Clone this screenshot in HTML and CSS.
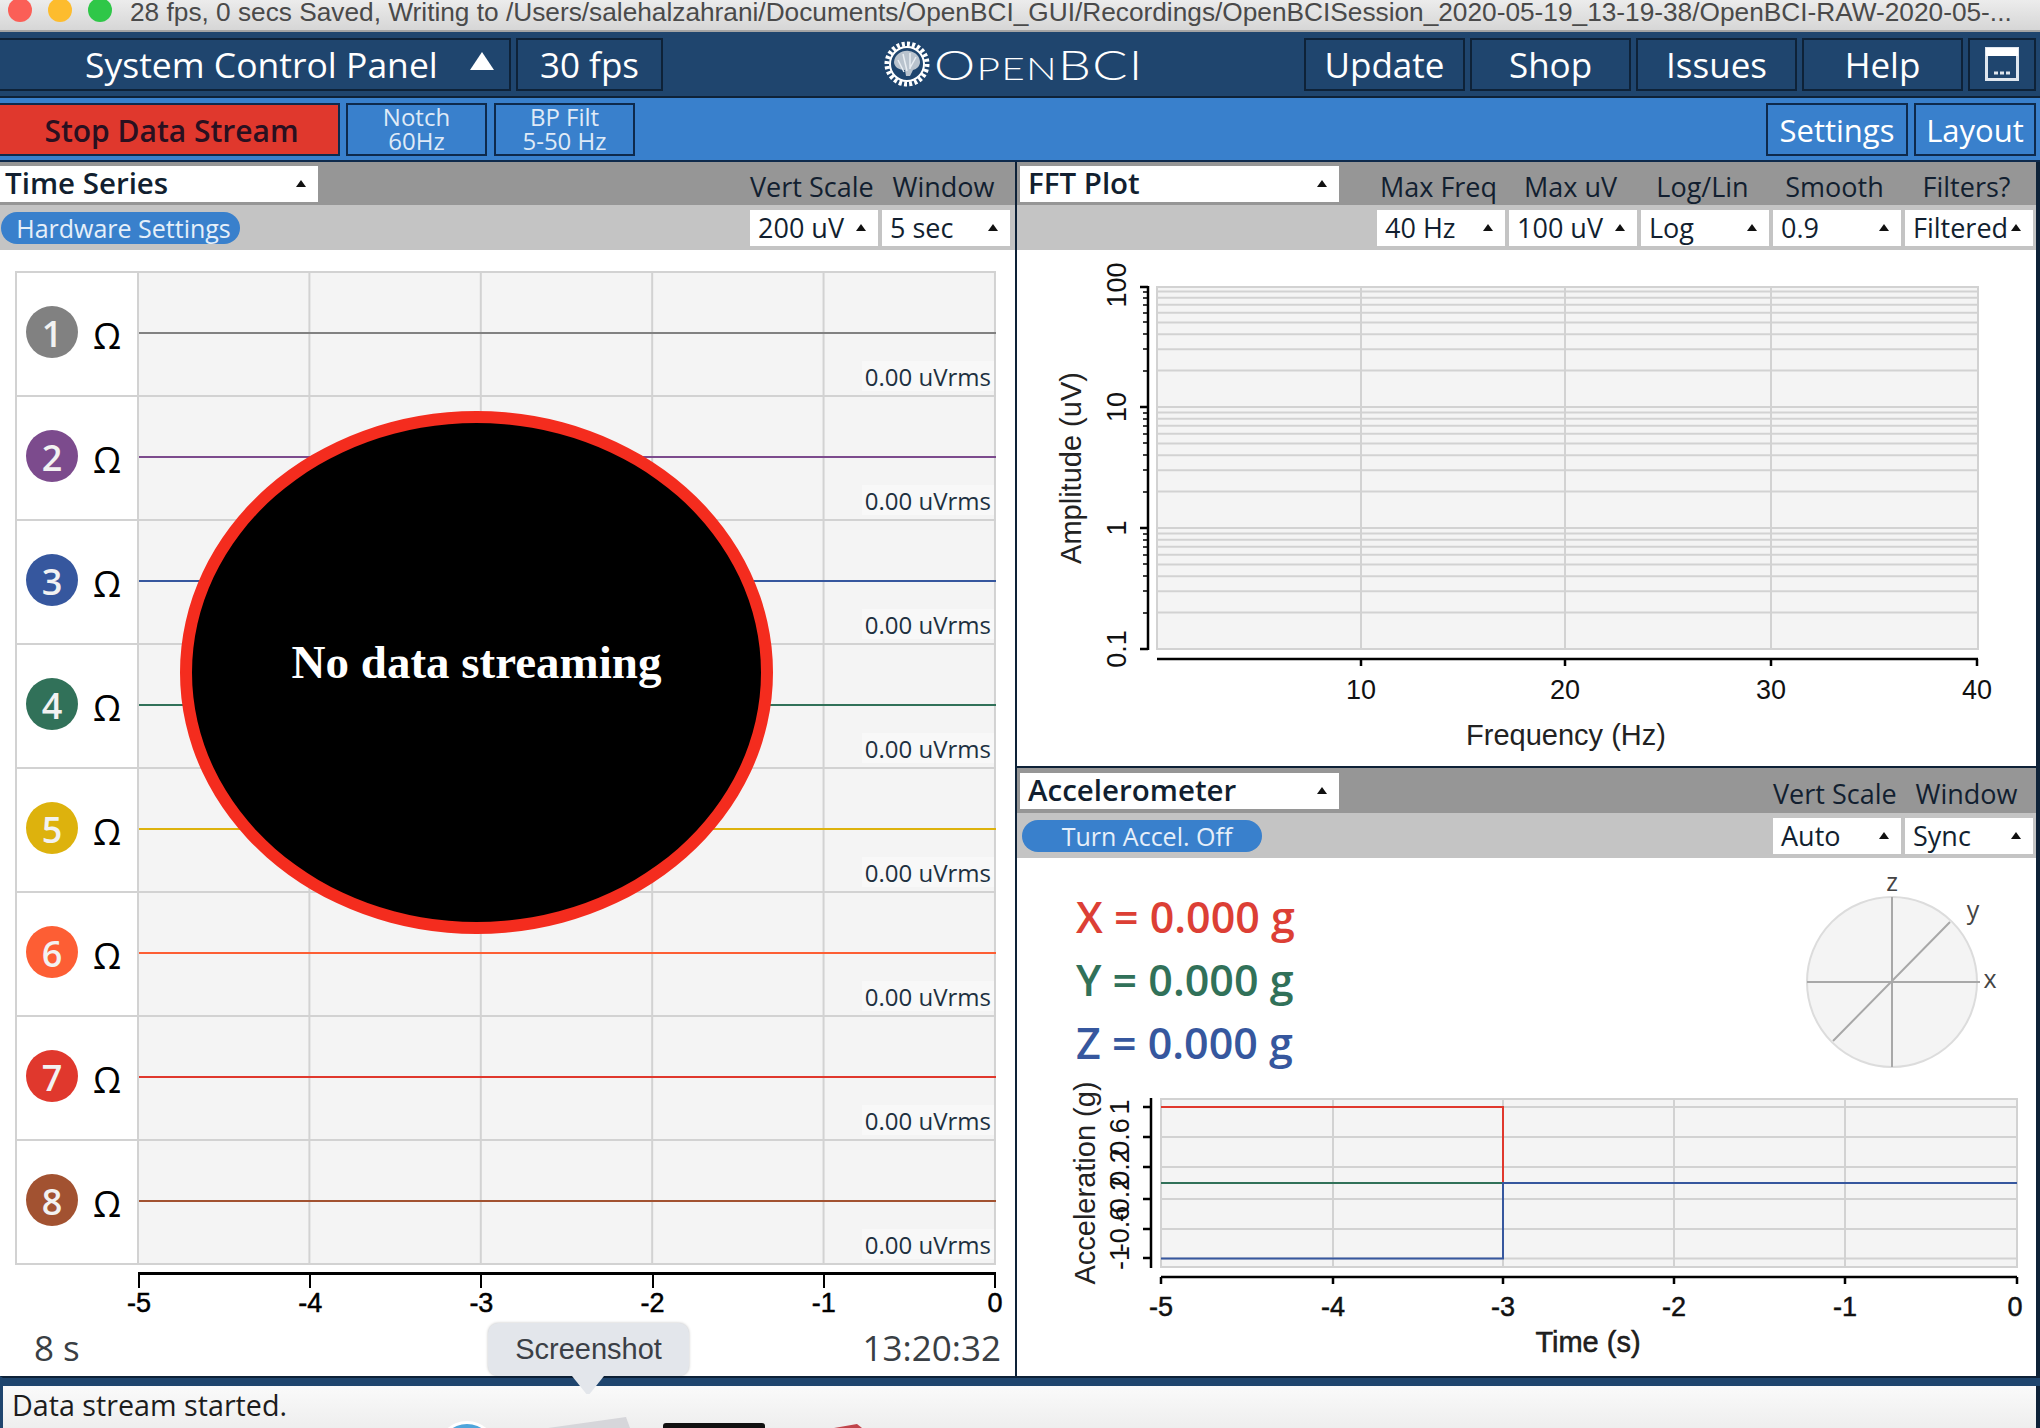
FILE: index.html
```html
<!DOCTYPE html>
<html>
<head>
    <meta charset="utf-8" />
    <title>OpenBCI GUI</title>
    <link rel="stylesheet" href="styles.css">
</head>
<body>
<div class="app">
    <div class="titlebar">
        <span class="light red"></span>
        <span class="light yellow"></span>
        <span class="light green"></span>
        <span class="title">28 fps, 0 secs Saved, Writing to /Users/salehalzahrani/Documents/OpenBCI_GUI/Recordings/OpenBCISession_2020-05-19_13-19-38/OpenBCI-RAW-2020-05-...</span>
    </div>

    <div class="navbar">
        <div class="nav-btn panel-btn">System Control Panel<span class="nav-arrow"></span></div>
        <div class="nav-btn fps-btn">30 fps</div>
        <div class="logo">
            <svg width="48" height="48" viewBox="0 0 48 48">
                <circle cx="24" cy="24" r="20" fill="none" stroke="#fff" stroke-width="5" stroke-dasharray="3 2.2"/>
                <circle cx="24" cy="24" r="17" fill="none" stroke="#fff" stroke-width="2"/>
                <path d="M11 22c1-8 8-12 15-11 7 1 11 6 11 11 0 4-3 7-7 8l-3 6h-4l-1-6c-6 0-11-3-11-8z" fill="#b9c3ce"/>
                <path d="M15 20l6 12M20 14l4 17M27 13l0 16M33 17l-6 11" stroke="#e8edf2" stroke-width="1.5" fill="none"/>
            </svg>
            <span class="logo-text">O<small>PEN</small>BCI</span>
        </div>
        <div class="nav-btn link-btn">Update</div>
        <div class="nav-btn link-btn">Shop</div>
        <div class="nav-btn link-btn">Issues</div>
        <div class="nav-btn link-btn">Help</div>
        <div class="nav-btn icon-btn">
            <svg width="34" height="34" viewBox="0 0 34 34">
                <rect x="1.5" y="1.5" width="31" height="31" fill="none" stroke="#dfe6ee" stroke-width="3"/>
                <rect x="1" y="1" width="32" height="8" fill="#fff"/>
                <path d="M9 26h4M15 26h4M21 26h4" stroke="#dfe6ee" stroke-width="3"/>
            </svg>
        </div>
    </div>

    <div class="toolbar">
        <div class="tool-btn stop-btn">Stop Data Stream</div>
        <div class="tool-btn filter-btn">Notch<br>60Hz</div>
        <div class="tool-btn filter-btn">BP Filt<br>5-50 Hz</div>
        <div class="toolbar-space"></div>
        <div class="tool-btn settings-btn">Settings</div>
        <div class="tool-btn layout-btn">Layout</div>
    </div>

    <div class="main">
        <div class="pane left-pane">
            <div class="widget-head">
                <div class="select widget-select">Time Series<span class="caret"></span></div>
                <div class="head-labels">
                    <span class="head-label">Vert Scale</span>
                    <span class="head-label">Window</span>
                </div>
            </div>
            <div class="widget-sub">
                <div class="pill hw-pill">Hardware Settings</div>
                <div class="sub-selects">
                    <div class="select sub-select">200 uV<span class="caret"></span></div>
                    <div class="select sub-select">5 sec<span class="caret"></span></div>
                </div>
            </div>

            <div class="ts-body">
                <div class="ts-plot">
                    <div class="ch-row">
                        <div class="ch-label"><span class="ch-num c1">1</span><span class="ohm">Ω</span></div>
                        <div class="trace">
                            <div class="trace-top b1"></div>
                            <div class="trace-bottom"><span class="rms">0.00 uVrms</span></div>
                        </div>
                    </div>
                    <div class="ch-row">
                        <div class="ch-label"><span class="ch-num c2">2</span><span class="ohm">Ω</span></div>
                        <div class="trace">
                            <div class="trace-top b2"></div>
                            <div class="trace-bottom"><span class="rms">0.00 uVrms</span></div>
                        </div>
                    </div>
                    <div class="ch-row">
                        <div class="ch-label"><span class="ch-num c3">3</span><span class="ohm">Ω</span></div>
                        <div class="trace">
                            <div class="trace-top b3"></div>
                            <div class="trace-bottom"><span class="rms">0.00 uVrms</span></div>
                        </div>
                    </div>
                    <div class="ch-row">
                        <div class="ch-label"><span class="ch-num c4">4</span><span class="ohm">Ω</span></div>
                        <div class="trace">
                            <div class="trace-top b4"></div>
                            <div class="trace-bottom"><span class="rms">0.00 uVrms</span></div>
                        </div>
                    </div>
                    <div class="ch-row">
                        <div class="ch-label"><span class="ch-num c5">5</span><span class="ohm">Ω</span></div>
                        <div class="trace">
                            <div class="trace-top b5"></div>
                            <div class="trace-bottom"><span class="rms">0.00 uVrms</span></div>
                        </div>
                    </div>
                    <div class="ch-row">
                        <div class="ch-label"><span class="ch-num c6">6</span><span class="ohm">Ω</span></div>
                        <div class="trace">
                            <div class="trace-top b6"></div>
                            <div class="trace-bottom"><span class="rms">0.00 uVrms</span></div>
                        </div>
                    </div>
                    <div class="ch-row">
                        <div class="ch-label"><span class="ch-num c7">7</span><span class="ohm">Ω</span></div>
                        <div class="trace">
                            <div class="trace-top b7"></div>
                            <div class="trace-bottom"><span class="rms">0.00 uVrms</span></div>
                        </div>
                    </div>
                    <div class="ch-row">
                        <div class="ch-label"><span class="ch-num c8">8</span><span class="ohm">Ω</span></div>
                        <div class="trace">
                            <div class="trace-top b8"></div>
                            <div class="trace-bottom"><span class="rms">0.00 uVrms</span></div>
                        </div>
                    </div>
                </div>

                <div class="ts-axis">
                    <span class="ts-tick">-5</span>
                    <span class="ts-tick">-4</span>
                    <span class="ts-tick">-3</span>
                    <span class="ts-tick">-2</span>
                    <span class="ts-tick">-1</span>
                    <span class="ts-tick">0</span>
                </div>

                <div class="ts-foot">
                    <span>8 s</span>
                    <span>13:20:32</span>
                </div>
            </div>

            <div class="no-data">No data streaming</div>
        </div>

        <div class="right-col">
            <div class="pane fft-pane">
                <div class="widget-head">
                    <div class="select widget-select">FFT Plot<span class="caret"></span></div>
                    <div class="head-labels">
                        <span class="head-label">Max Freq</span>
                        <span class="head-label">Max uV</span>
                        <span class="head-label">Log/Lin</span>
                        <span class="head-label">Smooth</span>
                        <span class="head-label">Filters?</span>
                    </div>
                </div>
                <div class="widget-sub">
                    <div class="sub-selects">
                        <div class="select sub-select">40 Hz<span class="caret"></span></div>
                        <div class="select sub-select">100 uV<span class="caret"></span></div>
                        <div class="select sub-select">Log<span class="caret"></span></div>
                        <div class="select sub-select">0.9<span class="caret"></span></div>
                        <div class="select sub-select">Filtered<span class="caret"></span></div>
                    </div>
                </div>
                <svg class="chart fft-chart" viewBox="1017 250 1019 516">
                    <rect class="plot-bg" x="1157" y="287" width="821" height="362"/>
                    <path class="grid" d="M1361 287V649M1565 287V649M1771 287V649
                        M1157 612.6H1978M1157 591.3H1978M1157 576.2H1978M1157 564.4H1978M1157 554.8H1978M1157 546.7H1978M1157 539.7H1978M1157 533.5H1978M1157 528H1978
                        M1157 491.6H1978M1157 470.3H1978M1157 455.2H1978M1157 443.4H1978M1157 433.8H1978M1157 425.7H1978M1157 418.7H1978M1157 412.5H1978M1157 407H1978
                        M1157 370.6H1978M1157 349.3H1978M1157 334.2H1978M1157 322.4H1978M1157 312.8H1978M1157 304.7H1978M1157 297.7H1978M1157 291.5H1978"/>
                    <path class="axis" d="M1148 286V650M1140 287H1148M1140 407H1148M1140 528H1148M1140 649H1148
                        M1157 659H1978M1361 659V666M1565 659V666M1771 659V666M1977 659V666"/>
                    <path class="axis-thin" d="M1143 613H1148M1143 591H1148M1143 576H1148M1143 564H1148M1143 555H1148M1143 547H1148M1143 540H1148M1143 534H1148
                        M1143 492H1148M1143 470H1148M1143 455H1148M1143 443H1148M1143 434H1148M1143 426H1148M1143 419H1148M1143 413H1148
                        M1143 371H1148M1143 349H1148M1143 334H1148M1143 322H1148M1143 313H1148M1143 305H1148M1143 298H1148M1143 292H1148"/>
                    <text class="tick" x="1361" y="699">10</text>
                    <text class="tick" x="1565" y="699">20</text>
                    <text class="tick" x="1771" y="699">30</text>
                    <text class="tick" x="1977" y="699">40</text>
                    <text class="ax-label" x="1566" y="745">Frequency (Hz)</text>
                    <text class="tick" transform="translate(1126 285) rotate(-90)">100</text>
                    <text class="tick" transform="translate(1126 407) rotate(-90)">10</text>
                    <text class="tick" transform="translate(1126 528) rotate(-90)">1</text>
                    <text class="tick" transform="translate(1126 649) rotate(-90)">0.1</text>
                    <text class="ax-label" transform="translate(1081 468) rotate(-90)">Amplitude (uV)</text>
                </svg>
            </div>

            <div class="pane accel-pane">
                <div class="widget-head">
                    <div class="select widget-select">Accelerometer<span class="caret"></span></div>
                    <div class="head-labels">
                        <span class="head-label">Vert Scale</span>
                        <span class="head-label">Window</span>
                    </div>
                </div>
                <div class="widget-sub">
                    <div class="pill accel-pill">Turn Accel. Off</div>
                    <div class="sub-selects">
                        <div class="select sub-select">Auto<span class="caret"></span></div>
                        <div class="select sub-select">Sync<span class="caret"></span></div>
                    </div>
                </div>
                <svg class="chart accel-chart" viewBox="1017 858 1019 518">
                    <text class="g-val g-x" x="1076" y="933">X = 0.000 g</text>
                    <text class="g-val g-y" x="1076" y="996">Y = 0.000 g</text>
                    <text class="g-val g-z" x="1076" y="1059">Z = 0.000 g</text>

                    <circle class="polar" cx="1892" cy="982" r="85"/>
                    <path class="polar-line" d="M1807 982H1980M1892 897V1067M1950 922L1833 1041"/>
                    <text class="polar-label" x="1892" y="891">z</text>
                    <text class="polar-label" x="1973" y="919">y</text>
                    <text class="polar-label" x="1990" y="988">x</text>

                    <rect class="plot-bg" x="1161" y="1099" width="856" height="168"/>
                    <path class="grid" d="M1333 1099V1267M1503 1099V1267M1674 1099V1267M1845 1099V1267
                        M1161 1107H2017M1161 1137H2017M1161 1167H2017M1161 1199H2017M1161 1229H2017M1161 1258.5H2017"/>
                    <path class="line-red" d="M1161 1107H1503V1183"/>
                    <path class="line-green" d="M1161 1183H1503"/>
                    <path class="line-blue" d="M1161 1258.5H1503V1183H2017"/>
                    <path class="axis" d="M1151 1098V1268M1143 1107H1151M1143 1137H1151M1143 1167H1151M1143 1199H1151M1143 1229H1151M1143 1258H1151
                        M1161 1277H2017M1161 1277V1284M1333 1277V1284M1503 1277V1284M1674 1277V1284M1845 1277V1284M2017 1277V1284"/>
                    <text class="tick heavy" x="1161" y="1316">-5</text>
                    <text class="tick heavy" x="1333" y="1316">-4</text>
                    <text class="tick heavy" x="1503" y="1316">-3</text>
                    <text class="tick heavy" x="1674" y="1316">-2</text>
                    <text class="tick heavy" x="1845" y="1316">-1</text>
                    <text class="tick heavy" x="2015" y="1316">0</text>
                    <text class="ax-label heavy" x="1588" y="1352">Time (s)</text>
                    <text class="tick" transform="translate(1129 1107) rotate(-90)">1</text>
                    <text class="tick" transform="translate(1129 1137) rotate(-90)">0.6</text>
                    <text class="tick" transform="translate(1129 1167) rotate(-90)">0.2</text>
                    <text class="tick" transform="translate(1129 1199) rotate(-90)">-0.2</text>
                    <text class="tick" transform="translate(1129 1229) rotate(-90)">-0.6</text>
                    <text class="tick" transform="translate(1129 1258) rotate(-90)">-1</text>
                    <text class="ax-label" transform="translate(1095 1183) rotate(-90)">Acceleration (g)</text>
                </svg>
            </div>
        </div>
    </div>

    <div class="helpbar">
        <div class="help-edge"></div>
        <div class="help-body">
            <span class="help-text">Data stream started.</span>
            <svg class="dock" width="500" height="11" viewBox="420 1417 500 11">
                <circle cx="467" cy="1451" r="30" fill="#fff"/>
                <circle cx="467" cy="1451" r="27" fill="#4fa5db"/>
                <path d="M548 1428L626 1417L630 1428Z" fill="#d6d6da"/>
                <rect x="663" y="1423" width="102" height="12" rx="3" fill="#111"/>
                <path d="M834 1428L857 1424L862 1428Z" fill="#c0444a"/>
            </svg>
        </div>
    </div>

    <div class="tooltip">Screenshot</div>
</div>
</body>
</html>
```

FILE: styles.css
```css
* {
    box-sizing: border-box;
}

body {
    margin: 0;
    padding: 0;
    background: #fff;
    font-family: "Open Sans", sans-serif;
    overflow: hidden;
}

.app {
    position: relative;
    width: 2040px;
    height: 1428px;
    overflow: hidden;
    display: flex;
    flex-direction: column;
}

/* window title */
.titlebar {
    height: 32px;
    flex: none;
    display: flex;
    align-items: flex-start;
    padding-left: 8px;
    gap: 16px;
    background: linear-gradient(#ececec, #d6d6d6);
    border-bottom: 2px solid #a4a4a4;
    overflow: hidden;
}

.light {
    width: 24px;
    height: 24px;
    border-radius: 50%;
    margin-top: -2px;
    flex: none;
}

.red { background: #fb5f57; }
.yellow { background: #fdbc2e; }
.green { background: #2fc748; }

.title {
    margin-left: 2px;
    margin-top: -1px;
    font-family: "Liberation Sans", sans-serif;
    font-size: 26.25px;
    line-height: 26px;
    color: #4a4a4a;
    white-space: nowrap;
}

/* top bars */
.navbar {
    height: 66px;
    flex: none;
    display: flex;
    align-items: center;
    gap: 5px;
    background: #1f456e;
    border-bottom: 2px solid #0e2238;
}

.nav-btn {
    height: 53px;
    flex: none;
    display: flex;
    align-items: center;
    justify-content: center;
    background: #1f456e;
    border: 2px solid #0e2238;
    color: #fff;
    font-size: 35px;
}

.panel-btn {
    width: 511px;
    border-left: none;
    justify-content: flex-start;
    padding-left: 85px;
    font-size: 35.5px;
}

.nav-arrow {
    margin-left: 32px;
    margin-top: -6px;
    border-left: 12px solid transparent;
    border-right: 12px solid transparent;
    border-bottom: 18px solid #fff;
}

.fps-btn {
    width: 147px;
}

.link-btn {
    width: 161px;
}

.icon-btn {
    width: 68px;
    margin-right: 4px;
}

.logo {
    flex: 1;
    min-width: 0;
    display: flex;
    align-items: center;
    padding-left: 215px;
    gap: 3px;
    color: #fff;
}

.logo-text {
    font-family: "Lato", sans-serif;
    font-weight: 300;
    font-size: 41px;
    letter-spacing: 1px;
    transform: scaleX(1.27);
    transform-origin: left center;
}

.logo-text small {
    font-size: 32px;
}

.toolbar {
    height: 62px;
    flex: none;
    display: flex;
    align-items: center;
    gap: 6px;
    background: #3980cc;
}

.tool-btn {
    height: 53px;
    flex: none;
    display: flex;
    align-items: center;
    justify-content: center;
    text-align: center;
    background: #3980cc;
    border: 2px solid #0e2a4c;
    color: #fff;
    font-size: 31px;
    padding-top: 2px;
}

.stop-btn {
    width: 340px;
    padding-left: 5px;
    border-left: none;
    background: #e0382d;
    color: #2a1020;
    font-size: 30px;
    font-weight: 600;
}

.filter-btn {
    width: 141px;
    padding-top: 0;
    font-size: 24px;
    line-height: 24px;
    color: #dfeaf7;
    margin-right: 1px;
}

.toolbar-space {
    flex: 1;
}

.settings-btn {
    width: 142px;
}

.layout-btn {
    width: 122px;
    margin-right: 4px;
}

/* panes */
.main {
    flex: 1;
    display: flex;
    border-top: 2px solid #0e2a4c;
    min-height: 0;
}

.pane {
    position: relative;
    display: flex;
    flex-direction: column;
    background: #fff;
}

.left-pane {
    width: 1017px;
    border-right: 2px solid #0e2238;
}

.right-col {
    width: 1023px;
    display: flex;
    flex-direction: column;
    border-right: 4px solid #0e2238;
}

.fft-pane {
    height: 606px;
    flex: none;
    border-bottom: 2px solid #0e2238;
}

.accel-pane {
    flex: 1;
    min-height: 0;
}

.widget-head {
    height: 43px;
    flex: none;
    display: flex;
    align-items: center;
    background: #969696;
}

.accel-pane .widget-head {
    height: 45px;
}

.widget-sub {
    height: 45px;
    flex: none;
    display: flex;
    align-items: center;
    justify-content: space-between;
    background: #c4c4c4;
}

.select {
    position: relative;
    height: 36px;
    flex: none;
    display: flex;
    align-items: center;
    background: #fff;
    color: #121f30;
    white-space: nowrap;
}

.widget-select {
    width: 318px;
    padding-left: 5px;
    padding-bottom: 2px;
    font-size: 29.5px;
    font-weight: 600;
}

.right-col .widget-select {
    width: 319px;
    margin-left: 3px;
    padding-left: 8px;
}

.caret {
    position: absolute;
    right: 12px;
    top: 14px;
    border-left: 5px solid transparent;
    border-right: 5px solid transparent;
    border-bottom: 7px solid #111;
}

.head-labels {
    display: flex;
    gap: 4px;
    margin-left: auto;
    margin-right: 3px;
    padding-top: 5px;
}

.left-pane .head-labels {
    margin-right: 5px;
}

.head-label {
    width: 128px;
    padding-right: 5px;
    text-align: center;
    font-size: 27px;
    color: #121f30;
    white-space: nowrap;
}

.sub-selects {
    display: flex;
    gap: 4px;
    margin-left: auto;
    margin-right: 3px;
}

.left-pane .sub-selects {
    margin-right: 5px;
}

.sub-select {
    width: 128px;
    padding-left: 8px;
    font-size: 27px;
}

.pill {
    height: 32px;
    display: flex;
    align-items: center;
    justify-content: center;
    border-radius: 16px;
    background: #3980cc;
    color: #e6eff9;
    font-size: 25px;
    white-space: nowrap;
}

.hw-pill {
    width: 239px;
    margin-left: 1px;
    padding-left: 6px;
}

.accel-pill {
    width: 240px;
    margin-left: 5px;
    padding-left: 10px;
}

/* time series */
.ts-body {
    flex: 1;
    display: flex;
    flex-direction: column;
    padding: 21px 19px 0 15px;
    min-height: 0;
}

.ts-plot {
    border-top: 2px solid #d2d2d2;
    border-left: 2px solid #d2d2d2;
    flex: none;
}

.ch-row {
    height: 124px;
    display: flex;
    border-bottom: 2px solid #d2d2d2;
}

.ch-label {
    width: 122px;
    flex: none;
    display: flex;
    align-items: flex-start;
    padding: 33px 0 0 9px;
    background: #fff;
    border-right: 2px solid #d2d2d2;
}

.ch-num {
    width: 52px;
    height: 52px;
    padding-top: 3px;
    border-radius: 50%;
    display: flex;
    align-items: center;
    justify-content: center;
    color: #f2f2f2;
    font-size: 36px;
    font-weight: 600;
}

.c1 { background: #818181; }
.c2 { background: #7c4b8d; }
.c3 { background: #36579e; }
.c4 { background: #317159; }
.c5 { background: #ddb20d; }
.c6 { background: #fd5e34; }
.c7 { background: #e0382d; }
.c8 { background: #a25231; }

.ohm {
    margin-left: 15px;
    margin-top: 10px;
    font-family: "Open Sans", sans-serif;
    font-size: 36px;
    line-height: 40px;
    color: #000;
}

.trace {
    flex: 1;
    display: flex;
    flex-direction: column;
    background-color: #f4f4f4;
    background-image: linear-gradient(to left, #d2d2d2 2px, transparent 2px);
    background-size: 20% 100%;
}

.trace-top {
    height: 61px;
    border-bottom: 2px solid;
    flex: none;
}

.b1 { border-color: #818181; }
.b2 { border-color: #7c4b8d; }
.b3 { border-color: #36579e; }
.b4 { border-color: #317159; }
.b5 { border-color: #ddb20d; }
.b6 { border-color: #fd5e34; }
.b7 { border-color: #e0382d; }
.b8 { border-color: #a25231; }

.trace-bottom {
    flex: 1;
    display: flex;
    justify-content: flex-end;
    align-items: flex-end;
    padding: 0 2px 4px 0;
}

.rms {
    height: 30px;
    padding: 0 3px;
    display: flex;
    align-items: center;
    background: #f8f8f8;
    color: #20303f;
    font-size: 24px;
    white-space: nowrap;
}

.ts-axis {
    margin: 7px 0 0 123px;
    height: 8px;
    flex: none;
    display: flex;
    justify-content: space-between;
    border-top: 3px solid #000;
}

.ts-tick {
    width: 2px;
    height: 7px;
    background: #000;
    display: flex;
    justify-content: center;
    padding-top: 13px;
    font-family: "Liberation Sans", sans-serif;
    font-size: 27px;
    line-height: 30px;
    color: #000;
    -webkit-text-stroke: 0.5px #000;
}

.ts-foot {
    margin-top: 46px;
    display: flex;
    justify-content: space-between;
    padding: 0 0 0 19px;
    margin-right: -5px;
    font-size: 35px;
    line-height: 44px;
    color: #3a3f44;
}

/* the round camera overlay */
.no-data {
    position: absolute;
    left: 180px;
    top: 249px;
    width: 593px;
    height: 523px;
    display: flex;
    align-items: center;
    justify-content: center;
    padding-bottom: 22px;
    background: #000;
    border: 12px solid #f42c1e;
    border-radius: 50%;
    color: #fff;
    font-family: "Liberation Serif", serif;
    font-size: 47px;
    font-weight: 700;
}

/* charts */
.chart {
    display: block;
    flex: 1;
    width: 1019px;
    min-height: 0;
}

.plot-bg {
    fill: #f4f4f4;
    stroke: #d2d2d2;
    stroke-width: 2;
}

.grid {
    fill: none;
    stroke: #d2d2d2;
    stroke-width: 2;
}

.axis {
    fill: none;
    stroke: #000;
    stroke-width: 2.5;
}

.axis-thin {
    fill: none;
    stroke: #000;
    stroke-width: 1.5;
}

.tick {
    font-family: "Liberation Sans", sans-serif;
    font-size: 27px;
    text-anchor: middle;
    fill: #111;
}

.ax-label {
    font-family: "Liberation Sans", sans-serif;
    font-size: 29px;
    text-anchor: middle;
    fill: #222;
}

.heavy {
    stroke: #111;
    stroke-width: 0.5;
}

.g-val {
    font-size: 43px;
    font-weight: 600;
}

.g-x { fill: #dc3f35; }
.g-y { fill: #317159; }
.g-z { fill: #36579e; }

.polar {
    fill: #f4f4f4;
    stroke: #dcdcdc;
    stroke-width: 2;
}

.polar-line {
    fill: none;
    stroke: #a8a8a8;
    stroke-width: 2;
}

.polar-label {
    font-size: 25px;
    text-anchor: middle;
    fill: #444;
}

.line-red, .line-green, .line-blue {
    fill: none;
    stroke-width: 2;
}

.line-red { stroke: #e0382d; }
.line-green { stroke: #317159; }
.line-blue { stroke: #36579e; }

/* bottom help strip */
.helpbar {
    height: 52px;
    flex: none;
    display: flex;
    flex-direction: column;
    border-top: 2px solid #0e2238;
    border-left: 3px solid #1f456e;
    border-right: 4px solid #0e2238;
}

.help-edge {
    height: 8px;
    flex: none;
    margin-left: -3px;
    margin-right: -4px;
    background: #1f456e;
}

.help-body {
    position: relative;
    flex: 1;
    display: flex;
    align-items: center;
    padding-left: 9px;
    background: linear-gradient(#fafafa, #eeeeee);
    overflow: hidden;
}

.help-text {
    font-size: 28.7px;
    line-height: 36px;
    color: #1c1c1c;
    margin-top: -4px;
}

.dock {
    position: absolute;
    left: 417px;
    bottom: 0;
}

/* dock tooltip */
.tooltip {
    position: absolute;
    left: 488px;
    top: 1323px;
    width: 201px;
    height: 53px;
    display: flex;
    align-items: center;
    justify-content: center;
    border-radius: 10px;
    background: #e3e6eb;
    box-shadow: 0 0 3px rgba(0,0,0,0.25);
    color: #3b3f46;
    font-family: "Liberation Sans", sans-serif;
    font-size: 29px;
}

.tooltip::after {
    content: "";
    position: absolute;
    left: 84px;
    top: 53px;
    width: 32px;
    height: 18px;
    background: #e3e6eb;
    clip-path: polygon(0 0, 100% 0, 55% 100%, 45% 100%);
}
```
